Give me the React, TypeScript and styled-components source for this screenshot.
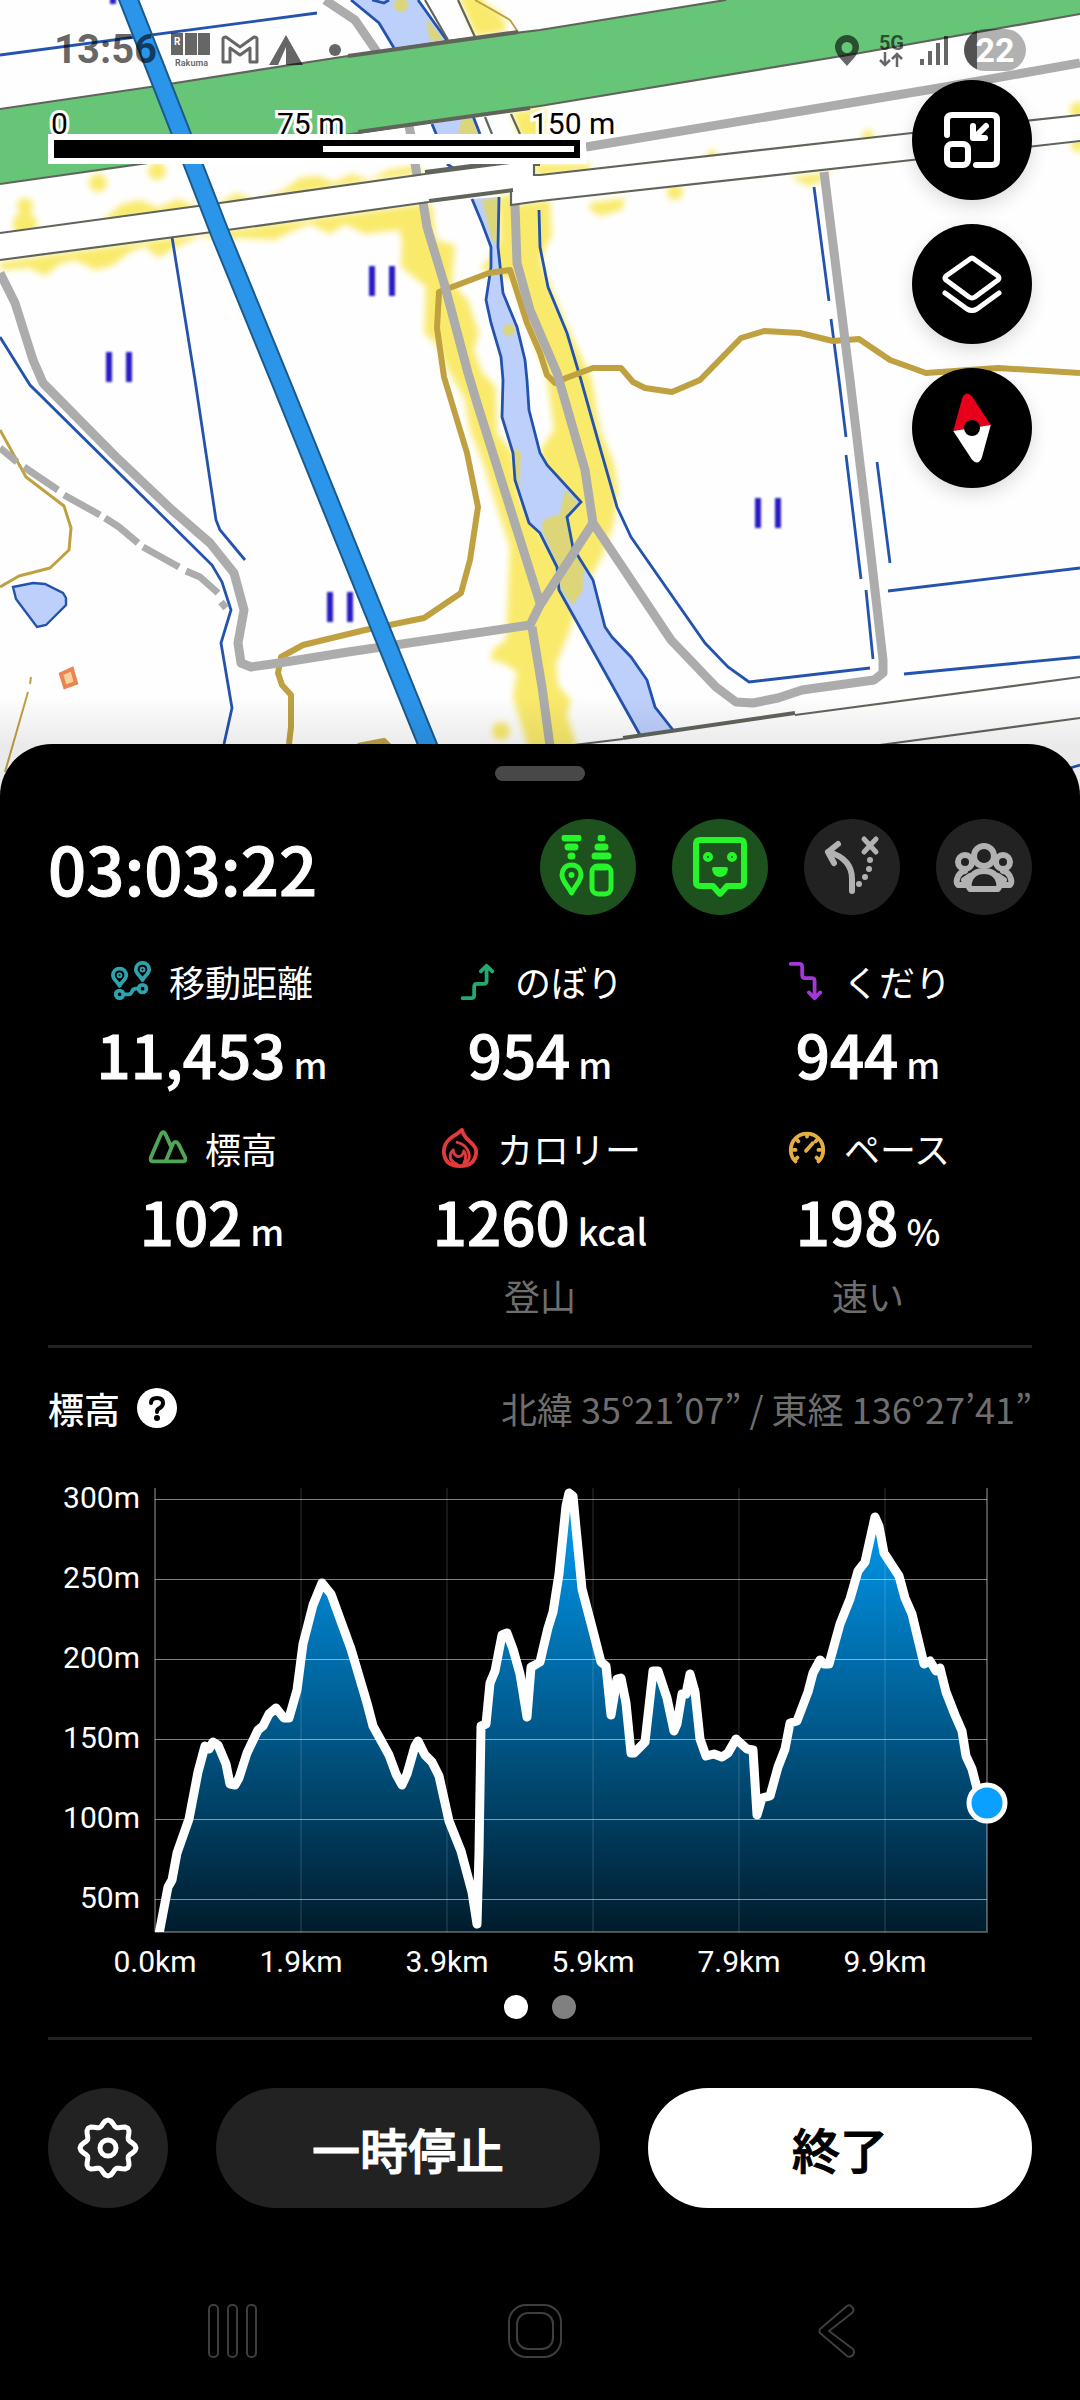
import React from 'react';
import styled, { createGlobalStyle, css } from 'styled-components';

const jp = '"Noto Sans CJK JP", "Noto Sans", sans-serif';
const roboto = 'Roboto, "Liberation Sans", sans-serif';

/* a weight between the family's Medium and Bold */
const semibold = css`
  font-weight: 500;
  -webkit-text-stroke: 1px currentColor;
`;

const GlobalStyle = createGlobalStyle`
  *, *::before, *::after { box-sizing: border-box; }
  body { margin: 0; background: #000; color: #fff; font-family: ${jp}; }
  button { border: 0; padding: 0; margin: 0; font: inherit; color: inherit; background: none; cursor: pointer; }
  svg { display: block; }
`;

const Screen = styled.div`
  min-height: 100vh;
  display: flex;
  flex-direction: column;
  background: #000;
`;

/* ---------- map ---------- */

const MapSection = styled.section`
  position: relative;
  height: 800px;
  overflow: hidden;
  background: #fefefe;
`;

const MapCanvas = styled.svg`
  position: absolute;
  inset: 0;
  width: 100%;
  height: 100%;
`;

const MapShade = styled.div`
  position: absolute;
  left: 0;
  right: 0;
  bottom: 0;
  height: 104px;
  background: linear-gradient(rgba(0, 0, 0, 0), rgba(0, 0, 0, 0.08) 48%, rgba(0, 0, 0, 0.08));
`;

const StatusBar = styled.header`
  position: relative;
  display: flex;
  align-items: center;
  justify-content: space-between;
  height: 80px;
  padding: 20px 54px 0;
  color: rgba(0, 0, 0, 0.6);
  font-family: ${roboto};
`;

const StatusGroup = styled.div<{ $gap: number }>`
  display: flex;
  align-items: center;
  gap: ${(p) => p.$gap}px;
`;

const Clock = styled.time`
  margin-right: 4px;
  font-size: 40px;
  line-height: 44px;
  font-weight: 700;
`;

const Dot = styled.span`
  width: 12px;
  height: 12px;
  margin-left: 16px;
  border-radius: 50%;
  background: currentColor;
`;

const Network = styled.span`
  display: flex;
  flex-direction: column;
  align-items: center;
  margin-left: 4px;
  font-size: 20px;
  line-height: 18px;
  font-weight: 700;
`;

const Battery = styled.span`
  display: grid;
  place-items: center;
  width: 62px;
  height: 42px;
  border-radius: 21px;
  background: linear-gradient(90deg, rgba(0, 0, 0, 0.68) 13px, rgba(0, 0, 0, 0.3) 13px);
  color: #fff;
  font-size: 34px;
  line-height: 42px;
  font-weight: 700;
`;

const MapOverlay = styled.div`
  position: relative;
  display: flex;
  justify-content: space-between;
  align-items: flex-start;
  padding: 0 48px;
`;

const Scale = styled.div`
  padding-top: 34px;
`;

const ScaleLabels = styled.div`
  display: grid;
  grid-template-columns: 226px 254px auto;
  padding-left: 3px;
  color: #000;
  font: 400 30px/20px ${roboto};
  -webkit-text-stroke: 6px #fff;
  paint-order: stroke fill;
`;

const ScaleTrack = styled.div`
  width: 538px;
  padding: 6px;
  background: #fff;
`;

const ScaleBar = styled.div`
  height: 18px;
  padding: 6px 6px 6px 269px;
  background: #000;
`;

const ScaleHalf = styled.div`
  height: 6px;
  background: #fff;
`;

const MapTools = styled.div`
  display: flex;
  flex-direction: column;
  gap: 24px;
`;

const MapButton = styled.button`
  display: grid;
  place-items: center;
  width: 120px;
  height: 120px;
  border-radius: 50%;
  background: #000;
  box-shadow: 0 6px 18px rgba(0, 0, 0, 0.14);
`;

/* ---------- sheet ---------- */

const Sheet = styled.main`
  position: relative;
  flex: 1;
  margin-top: -56px;
  padding: 22px 48px 0;
  border-radius: 52px 52px 0 0;
  background: #000;
  display: flex;
  flex-direction: column;
`;

const Handle = styled.div`
  align-self: center;
  width: 90px;
  height: 15px;
  border-radius: 8px;
  background: #484848;
`;

const Summary = styled.div`
  display: flex;
  align-items: center;
  justify-content: space-between;
  margin-top: 38px;
`;

const Timer = styled.h1`
  margin: 0;
  font-size: 67px;
  line-height: 96px;
  ${semibold}
`;

const Toggles = styled.div`
  display: flex;
  gap: 36px;
`;

const Toggle = styled.button<{ $on?: boolean }>`
  display: grid;
  place-items: center;
  width: 96px;
  height: 96px;
  border-radius: 50%;
  background: ${(p) => (p.$on ? '#1d521f' : '#222')};
  color: ${(p) => (p.$on ? '#27f52c' : '#b2b2b2')};
`;

const Stats = styled.dl`
  display: grid;
  grid-template-columns: repeat(3, 1fr);
  row-gap: 24px;
  margin: 40px 0 0;
  padding-bottom: 24px;
  border-bottom: 3px solid #222;
`;

const Stat = styled.div`
  display: flex;
  flex-direction: column;
  align-items: center;
`;

const StatLabel = styled.dt`
  display: flex;
  align-items: center;
  gap: 16px;
  font-size: 36px;
  line-height: 52px;
`;

const StatValue = styled.dd`
  display: flex;
  align-items: baseline;
  gap: 8px;
  height: 91px;
  margin: 0;
  font-size: 60px;
  line-height: 91px;
  ${semibold}
`;

const Unit = styled.span`
  font-size: 36px;
  -webkit-text-stroke: 0;
`;

const StatNote = styled.dd`
  margin: 4px 0 0;
  font-size: 36px;
  line-height: 52px;
  color: #6e6e6e;
`;

const ChartHeader = styled.div`
  display: flex;
  align-items: center;
  justify-content: space-between;
  margin-top: 34px;
`;

const ChartTitle = styled.h2`
  display: flex;
  align-items: center;
  gap: 16px;
  margin: 0;
  font-size: 36px;
  line-height: 52px;
  font-weight: 500;
`;

const HelpButton = styled.button`
  width: 42px;
  height: 42px;
`;

const Coordinates = styled.p`
  margin: 0;
  font-size: 36px;
  line-height: 52px;
  color: #6e6e6e;
`;

const Chart = styled.svg`
  width: 100%;
  margin-top: 34px;
  font: 400 30px ${roboto};
`;

const Pager = styled.div`
  display: flex;
  justify-content: center;
  gap: 24px;
  margin-top: 13px;
  padding-bottom: 18px;
  border-bottom: 3px solid #222;
`;

const PageDot = styled.button<{ $active?: boolean }>`
  width: 24px;
  height: 24px;
  border-radius: 50%;
  background: ${(p) => (p.$active ? '#fff' : '#808080')};
`;

const Actions = styled.div`
  display: flex;
  gap: 48px;
  margin-top: 48px;
`;

const SettingsButton = styled.button`
  display: grid;
  place-items: center;
  width: 120px;
  height: 120px;
  border-radius: 50%;
  background: #222;
`;

const ActionButton = styled.button<{ $primary?: boolean }>`
  flex: 1;
  height: 120px;
  border-radius: 60px;
  font-size: 48px;
  line-height: 72px;
  ${semibold}
  background: ${(p) => (p.$primary ? '#fff' : '#222')};
  color: ${(p) => (p.$primary ? '#000' : '#fff')};
`;

const SystemNav = styled.nav`
  display: grid;
  grid-template-columns: repeat(3, 302px);
  justify-content: center;
  margin-top: 88px;
  padding-right: 10px;
`;

const NavButton = styled.button`
  display: grid;
  place-items: center;
  height: 70px;
`;

/* ---------- map artwork ---------- */

const fields: [number, number][] = [
  [382, 281],
  [119, 367],
  [340, 607],
  [768, 513],
];

const BaseMap = () => (
  <MapCanvas viewBox="0 0 1080 800" preserveAspectRatio="xMidYMin slice" aria-hidden="true">
    <defs>
      <filter id="soft" x="-5%" y="-5%" width="110%" height="110%">
        <feGaussianBlur stdDeviation="3" />
      </filter>
      <filter id="tiny" x="-20%" y="-20%" width="140%" height="140%">
        <feGaussianBlur stdDeviation="1" />
      </filter>
    </defs>

    <g fill="#f9ea6c" filter="url(#soft)">
      <path d="M458 -5L482 -5L490 20L476 38Z M476 0Q510 12 505 32L476 36Z" />
      <path d="M512 112L545 108V138H520Z M535 164H592L588 172L535 176Z" />
      <circle cx="25" cy="206" r="8" />
      <circle cx="25" cy="224" r="12" />
      <circle cx="98" cy="183" r="9" />
      <circle cx="157" cy="171" r="9" />
      <path d="M100 222L122 204L140 200L158 208L178 199L195 206L220 203L236 193L255 200L282 191L300 178L318 176L334 182L352 174L370 180L388 170L413 166L427 172L220 206Z" />
      <path d="M0 262L120 245L420 204L432 205L436 240L455 245L452 283L468 300L479 333L474 350L482 372L496 387L497 433L513 453L520 500L545 540L560 560L540 450L554 430L550 400L546 372L527 323L513 280L497 276L480 268L490 258L500 240L498 198L512 193L513 205L550 200L552 236L546 246L541 262L560 310L592 380L600 430L614 463L618 490L614 523L602 557L585 587L576 610L569 633L556 665L558 685L571 700L567 715L576 744L576 780L527 780L527 744L513 697L517 672L505 664L490 659L494 648L506 640L510 547L501 520L482 460L470 430L465 400L458 387L448 370L437 345L424 333L426 287L401 267L402 240L399 230L365 234L345 224L330 234L310 224L290 232L275 240L240 238L225 240L200 236L175 248L158 258L145 246L130 252L112 266L95 270L75 260L60 264L45 276L30 268L0 270Z" />
      <circle cx="501" cy="731" r="9" />
      <path d="M590 203L625 198L622 210L600 216L590 210Z" />
      <circle cx="675" cy="192" r="8" />
      <path d="M790 177L832 172L825 180L808 186Z" />
      <circle cx="868" cy="136" r="6" />
      <circle cx="712" cy="155" r="5" />
      <circle cx="1078" cy="110" r="8" />
      <circle cx="1078" cy="145" r="7" />
    </g>

    <path d="M0 233L220 203L510 163L535 165V175L912 133L1080 115V141L912 160L511 205V192L429 202L0 260Z" fill="#fff" />

    {/* river */}
    <g fill="#bdd0fc">
      <path d="M351 0L379 23L394 48L448 42L418 0Z" />
      <path d="M432 124L437 136H480L473 116Z" />
      <path d="M472 199L482 223L491 247V267L486 300L491 323L501 357L503 380L502 417L513 453L515 480L529 523L540 533L557 567L559 590L640 735L673 730L655 707L647 680L631 657L612 637L605 627L593 580L573 548L567 517L581 502L547 465L540 453L529 410L527 380L525 360L517 327L503 293L498 247L499 197Z" />
    </g>
    <g fill="#dcd678" filter="url(#tiny)">
      <circle cx="401" cy="5" r="7" />
      <path d="M426 18L445 41L430 40Z M462 118H473L479 134H458Z" />
      <path d="M482 200L498 198L497 245L492 240Z" />
      <circle cx="509" cy="330" r="6" />
      <path d="M513 448L521 452L519 490L517 488Z" />
      <path d="M565 490L578 502L568 516L574 545L584 566L583 590L573 605L561 590L558 567L542 530L543 520L560 514Z" />
    </g>
    <g fill="none" stroke="#2453ae" strokeWidth="2.8">
      <path d="M351 0L379 23L394 48 M418 0L448 42 M372 0L384 3L389 0 M432 124L437 136 M473 116L480 134 M447 164L453 168" />
      <path d="M472 199L482 223L491 247V267L486 300L491 323L501 357L503 380L502 417L513 453L515 480L529 523L540 533L557 567L559 590L640 735" />
      <path d="M499 197L498 247L503 293L517 327L525 360L527 380L529 410L540 453L547 465L581 502L567 517L573 548L593 580L605 627L612 637L631 657L647 680L655 707L673 730" />
      <path d="M0 55L317 13 M172 237L195 380L216 520L220 530L245 560" />
      <path d="M0 337L30 385L212 565L222 582L231 610L221 643L232 708L224 744" />
      <path d="M539 210L540 247L548 287L567 333L581 380L597 437L617 507L631 537L705 643L728 667L749 682L870 668" />
      <path d="M814 187L829 301 M831 319L839 380L846 437 M846 455L861 579 M866 590L873 659 M877 462L890 563 M888 591L1080 568 M904 674L1080 657" />
      <path d="M1070 768L1080 765" />
    </g>
    <path d="M13 587L33 583L45 584L63 593L66 598V605L46 625L37 627L16 599Z" fill="#bdd0fc" stroke="#2453ae" strokeWidth="2.4" />
    <path d="M61 674L72 669L76 683L65 687Z" fill="#fbd09b" stroke="#ea8452" strokeWidth="4" />

    {/* contour lines */}
    <g fill="none" stroke="#bfa142" strokeLinejoin="round">
      <path strokeWidth="6" d="M289 744L291 727V695L282 685L278 673L281 657L303 645L365 630L424 618L461 593L470 560L478 507L467 453L444 377L437 328L439 292L489 273L510 270L527 323L540 353L547 375L555 383L566 378L593 368H621L633 382L645 388L672 392L700 380L741 338L764 331L800 333L833 341L859 339L890 360L926 373L998 368L1080 373" />
      <path strokeWidth="3" d="M0 430L26 477L64 506L71 528L69 550L50 568L19 576L0 587" />
      <path strokeWidth="2" d="M31 677L30 684 M28 692L5 772" />
      <path strokeWidth="2" d="M475 0L510 20L518 32" />
      <path strokeWidth="6" d="M358 746L384 741L389 746" />
    </g>

    {/* roads */}
    <g fill="none" stroke="#acacac" strokeWidth="9" strokeLinejoin="round">
      <path d="M325 0L355 20L377 52 M409 126L411 136 M415 163L417 176 M586 147L939 88L1080 63" />
      <path d="M0 273L15 303L33 360L43 383L114 455L172 510L210 543L234 573L244 610L238 643L241 663L251 667L279 663L348 652L530 625L540 605L593 523" />
      <path d="M423 202L427 227L444 283L468 373L477 403L540 603 M515 205L517 263L530 310L557 373L585 470L593 523L671 640L716 687L736 702L753 703L778 698L802 690L874 680L883 673V660L870 547L850 380L824 172 M532 627L542 687L550 746" />
      <path strokeWidth="7" d="M0 448L17 462 M24 467L58 490 M64 495L100 515 M105 518L119 527L138 543 M143 547L179 567 M186 571L200 577L218 593 M221 602L226 608" />
    </g>

    <path d="M0 109L150 87L348 56L448 41L540 30L726 0H1080V14L860 53L540 106L358 133L0 184Z" fill="#67c578" />
    <g fill="none" stroke="#60655c" strokeWidth="2.2">
      <path d="M0 109L150 87L348 56L448 41L540 30L726 0 M1080 14L860 53L540 106L358 133L0 184" />
      <path d="M0 233L220 203L425 174L510 163 M540 175L912 133L1080 115 M0 260L220 231L429 202 M511 192V205L540 201L912 160L1080 141 M540 165H534V175H540" />
      <path d="M425 0L448 40 M458 0L475 37 M485 117L492 134 M511 114L520 134" />
      <path d="M574 745L623 739 M795 715L1080 677 M880 745L1080 718" />
      <path strokeWidth="4" d="M348 56L518 32 M358 132L530 108 M425 172L510 161 M429 201L513 190 M623 738L795 713" />
    </g>

    <g fill="#2a1dc4" filter="url(#tiny)">
      <rect x="110" y="-10" width="6" height="14" />
      {fields.map(([x, y]) => (
        <path key={x} d={`M${x - 13} ${y - 15}h6v30h-6z M${x + 7} ${y - 15}h6v30h-6z`} />
      ))}
    </g>

    {/* recorded track */}
    <g fill="none">
      <path d="M124 -12L181 133L221 236L280 380L437 768" stroke="#1b5a8c" strokeWidth="20" />
      <path d="M124 -12L181 133L221 236L280 380L437 768" stroke="#2b95ea" strokeWidth="16" />
    </g>
  </MapCanvas>
);

/* ---------- icons ---------- */

type LineProps = { size: number; box: number; width: number; color?: string; children: React.ReactNode };

const LineIcon = ({ size, box, width, color = 'currentColor', children }: LineProps) => (
  <svg width={size} height={size} viewBox={`0 0 ${box} ${box}`} fill="none" stroke={color} strokeWidth={width} strokeLinecap="round" strokeLinejoin="round" aria-hidden="true">
    {children}
  </svg>
);

const RakumaIcon = () => (
  <svg width="40" height="36" viewBox="0 0 40 36" fill="currentColor" aria-hidden="true">
    <path d="M0 1h12v22H0z M14 1h12v22H14z M27 1h12v22H27z" />
    <text x="3" y="13" fontSize="10" fontWeight="700" fill="#fff">R</text>
    <text x="4" y="34" fontSize="9" fontWeight="700">Rakuma</text>
  </svg>
);

const MailIcon = () => (
  <svg width="38" height="30" viewBox="0 0 38 30" fill="none" stroke="currentColor" strokeWidth="3" strokeLinejoin="round" aria-hidden="true">
    <path d="M2 27V4Q2 2 5 2L19 12L33 2Q36 2 36 4V27H29V13L19 20L9 13V27Z" />
  </svg>
);

const TentIcon = () => (
  <svg width="34" height="30" viewBox="0 0 34 30" fill="currentColor" aria-hidden="true">
    <path d="M17 0L34 30H17V12L9 30H0Z" />
  </svg>
);

const PinIcon = () => (
  <svg width="24" height="31" viewBox="0 0 24 31" fill="currentColor" fillRule="evenodd" aria-hidden="true">
    <path d="M12 0a12 12 0 0 1 12 12c0 7-7 13-12 19C7 25 0 19 0 12A12 12 0 0 1 12 0Zm0 7a5.500 5.500 0 1 0 0 11a5.500 5.500 0 0 0 0-11Z" />
  </svg>
);

const DataArrows = () => (
  <svg width="24" height="15" viewBox="0 0 24 15" fill="none" stroke="currentColor" strokeWidth="2.500" aria-hidden="true">
    <path d="M6 0V13 M1 8L6 13L11 8 M18 15V2 M13 7L18 2L23 7" />
  </svg>
);

const SignalIcon = () => (
  <svg width="28" height="29" viewBox="0 0 28 29" fill="currentColor" aria-hidden="true">
    <path d="M0 23h4v6H0z M8 15h4v14H8z M16 7h4v22h-4z M24 0h4v29h-4z" />
  </svg>
);

const CollapseIcon = () => (
  <LineIcon size={60} box={60} width={6} color="#fff">
    <path d="M5 25V10Q5 5 10 5H50Q55 5 55 10V50Q55 55 50 55H34" />
    <rect x="5" y="34" width="21" height="21" rx="5" />
    <path d="M44 16L33 27 M31 16V28H43" />
  </LineIcon>
);

const LayersIcon = () => (
  <LineIcon size={60} box={60} width={5} color="#fff">
    <path d="M28 5Q30 3 32 5L56 22Q58 24 56 26L33 43Q30 45 27 43L4 26Q2 24 4 22Z" />
    <path d="M3 39L25 55Q30 58 35 55L57 39" />
  </LineIcon>
);

const CompassIcon = () => (
  <svg width="80" height="80" viewBox="0 0 80 80" aria-hidden="true">
    <g transform="rotate(-9 40 40)">
      <path d="M21 40L35 9Q40 1 45 9L59 40Z" fill="#e6001a" />
      <path d="M21 40L35 71Q40 79 45 71L59 40Z" fill="#fff" />
    </g>
    <circle cx="40" cy="40" r="8" fill="#000" />
  </svg>
);

const GearCompareIcon = () => (
  <LineIcon size={64} box={64} width={5}>
    <path strokeWidth="7" d="M9 3H22 M12 12H19 M15 21H16 M45 3H46 M42 12H49 M39 21H52" />
    <path d="M15.500 30C9 30 6 35 6 40C6 46 12 51 15.500 58C19 51 25 46 25 40C25 35 22 30 15.500 30Z" />
    <rect x="36" y="31" width="19" height="28" rx="6" />
    <circle cx="15.500" cy="40" r="1.500" strokeWidth="3" />
    <path d="M41 33H50" />
  </LineIcon>
);

const FaceIcon = () => (
  <LineIcon size={64} box={64} width={6}>
    <path d="M12 5H52Q56 5 56 9V47Q56 51 52 51H39L33 58Q32 60 31 58L25 51H12Q8 51 8 47V9Q8 5 12 5Z" />
    <circle cx="20" cy="22" r="2" />
    <circle cx="44" cy="22" r="2" />
    <path d="M26 34H38Q37 40 32 40Q27 40 26 34Z" fill="currentColor" strokeWidth="4" />
  </LineIcon>
);

const DetourIcon = () => (
  <LineIcon size={64} box={64} width={6}>
    <path d="M32 56V44Q32 24 9 17 M8 17L18 9 M8 17L14 28" />
    <path strokeWidth="5" d="M44 4L56 17 M56 4L44 17" />
    <path d="M50 25V25 M49 34V34 M45 42V42 M39 49V49" />
  </LineIcon>
);

const GroupIcon = () => (
  <LineIcon size={64} box={64} width={6}>
    <circle cx="32" cy="21" r="10" />
    <path d="M18 54Q16 52 17 47Q20 36 32 36Q44 36 47 47Q48 52 46 54Z" />
    <path d="M15 50H6Q4 48 5 44Q7 37 13 36 M49 50H58Q60 48 59 44Q57 37 51 36" />
    <circle cx="13" cy="27" r="7" />
    <circle cx="51" cy="27" r="7" />
    <path d="M12 45L18 41 M52 45L46 41" />
  </LineIcon>
);

const DistanceIcon = () => (
  <LineIcon size={42} box={44} width={4} color="#2fa3ad">
    <path d="M9 9C5 9 2 12 2 16C2 20 7 23 9 27C11 23 16 20 16 16C16 12 13 9 9 9Z M33 3C29 3 26 6 26 10C26 14 31 17 33 21C35 17 40 14 40 10C40 6 37 3 33 3Z" />
    <circle cx="9" cy="16" r="1" />
    <circle cx="33" cy="10" r="1" />
    <circle cx="9" cy="36" r="4" />
    <circle cx="33" cy="30" r="4" />
    <path d="M14 36H18Q21 36 22 33Q23 30 26 30H29" />
  </LineIcon>
);

const ClimbIcon = () => (
  <LineIcon size={42} box={44} width={4} color="#27a871">
    <path d="M6 40H15Q18 40 18 37V28Q18 25 21 25H28Q31 25 31 22V7 M25 12L31 6L37 12" />
  </LineIcon>
);

const DescendIcon = () => (
  <LineIcon size={42} box={44} width={4} color="#a238d8">
    <path d="M6 4H15Q18 4 18 7V16Q18 19 21 19H28Q31 19 31 22V37 M25 34L31 40L37 34" />
  </LineIcon>
);

const MountainIcon = () => (
  <LineIcon size={42} box={44} width={4} color="#4fa657">
    <path d="M6 36H38Q41 36 40 32L33 18Q30 13 27 18L20 35 M6 36Q3 36 4 32L14 9Q17 2 20 9L25 20" />
  </LineIcon>
);

const FlameIcon = () => (
  <LineIcon size={42} box={44} width={4} color="#e03a3c">
    <path d="M24 3Q26 10 32 15Q39 21 39 26Q38 41 22 41Q6 41 5 26Q5 17 13 11Q20 7 24 3Z" />
    <path d="M19 16Q27 18 30 24Q35 35 26 38Q30 30 26 25Q25 31 20 31Q15 29 15 24Q11 27 12 33Q14 37 19 39" strokeWidth="3" />
  </LineIcon>
);

const PaceIcon = () => (
  <LineIcon size={42} box={44} width={4} color="#e5ae45">
    <path d="M10 36A17 17 0 1 1 34 36" />
    <path d="M22 8V10 M8 24H10 M34 24H36 M12 14L13 15 M10 34L12 32 M34 34L32 32 M31 15L32 14 M21 25L28 17" />
  </LineIcon>
);

const HelpIcon = () => (
  <svg width="42" height="42" viewBox="0 0 42 42" aria-hidden="true">
    <circle cx="21" cy="21" r="20" fill="#fff" />
    <path d="M15 16Q15 11 21 11Q27 11 27 16Q27 19 24 21Q21 22 21 25" fill="none" stroke="#000" strokeWidth="4" strokeLinecap="round" />
    <circle cx="21" cy="31" r="3" fill="#000" />
  </svg>
);

const gearPath = (() => {
  const steps = 64;
  const pts = Array.from({ length: steps }, (_, i) => {
    const a = (i / steps) * Math.PI * 2;
    const r = 25 + 3 * Math.cos(a * 8);
    return `${(32 + r * Math.sin(a)).toFixed(1)} ${(32 - r * Math.cos(a)).toFixed(1)}`;
  });
  return `M${pts.join('L')}Z`;
})();

const GearIcon = () => (
  <LineIcon size={64} box={64} width={5} color="#fff">
    <path d={gearPath} />
    <circle cx="32" cy="32" r="8" />
  </LineIcon>
);

/* ---------- elevation chart ---------- */

const profile: [number, number][] = [
  [4, 446], [13, 399], [17, 392], [22, 365], [34, 331], [43, 284], [50, 258], [54, 261], [58, 254], [63, 257],
  [71, 276], [75, 296], [80, 297], [84, 290], [92, 265], [103, 242], [108, 238], [114, 226], [121, 220], [129, 230],
  [134, 230], [142, 202], [148, 156], [158, 117], [167, 95], [176, 106], [196, 161], [212, 215], [218, 238], [234, 267],
  [241, 286], [247, 297], [252, 286], [260, 258], [263, 253], [270, 267], [277, 274], [284, 288], [294, 333], [306, 363],
  [317, 404], [322, 436], [324, 365], [326, 238], [331, 236], [335, 195], [340, 183], [347, 147], [352, 145], [358, 161],
  [365, 186], [372, 229], [376, 179], [380, 177], [385, 174], [388, 161], [393, 140], [398, 124], [404, 86], [411, 18],
  [414, 5], [418, 8], [421, 40], [427, 101], [438, 143], [446, 174], [451, 178], [456, 227], [462, 191], [466, 190],
  [471, 215], [476, 265], [479, 265], [490, 254], [498, 183], [503, 183], [512, 210], [519, 243], [522, 236], [527, 206],
  [531, 206], [535, 186], [540, 204], [545, 251], [551, 268], [559, 266], [567, 269], [573, 265], [581, 251], [592, 261],
  [598, 262], [602, 327], [607, 310], [615, 308], [623, 279], [630, 261], [635, 235], [642, 233], [653, 204], [658, 185],
  [665, 172], [669, 176], [674, 176], [685, 136], [695, 111], [703, 83], [710, 74], [716, 47], [720, 29], [724, 38],
  [729, 65], [744, 88], [750, 110], [757, 126], [769, 176], [775, 173], [781, 183], [785, 180], [791, 204], [800, 227],
  [807, 243], [811, 268], [817, 281], [824, 308], [832, 315],
];

const yTicks = [300, 250, 200, 150, 100, 50];
const xTicks = ['0.0km', '1.9km', '3.9km', '5.9km', '7.9km', '9.9km'];
const line = `M${profile.map((p) => p.join(' ')).join('L')}`;

const ElevationChart = () => (
  <Chart viewBox="-107 -20 984 514" role="img" aria-label="標高">
    <defs>
      <linearGradient id="area" x1="0" y1="0" x2="0" y2="444" gradientUnits="userSpaceOnUse">
        <stop offset="0" stopColor="#00a0fa" />
        <stop offset="1" stopColor="#001c2c" />
      </linearGradient>
      <clipPath id="plot">
        <rect x="0" y="-6" width="840" height="450" />
      </clipPath>
    </defs>
    <path d={`${line}V444H0Z`} fill="url(#area)" />
    <g stroke="#fff">
      {yTicks.map((t, i) => (
        <path key={t} d={`M0 ${11.5 + i * 80}H832`} strokeOpacity="0.5" />
      ))}
      {xTicks.map((t, i) => (
        <path key={t} d={`M${i * 146} 0V444`} strokeOpacity={i ? 0.09 : 0.3} strokeWidth="2" />
      ))}
      <path d="M832 0V444H0" fill="none" strokeOpacity="0.3" strokeWidth="2" />
    </g>
    <path d={line} clipPath="url(#plot)" fill="none" stroke="#fff" strokeWidth="9" strokeLinejoin="round" />
    <circle cx="832" cy="315" r="18" fill="#0aa0ff" stroke="#fff" strokeWidth="5" />
    <g fill="#fff">
      {yTicks.map((t, i) => (
        <text key={t} x="-15" y={20 + i * 80} textAnchor="end">{t}m</text>
      ))}
      {xTicks.map((t, i) => (
        <text key={t} x={i * 146} y="484" textAnchor="middle">{t}</text>
      ))}
    </g>
  </Chart>
);

/* ---------- page ---------- */

const stats = [
  { icon: <DistanceIcon />, label: '移動距離', value: '11,453', unit: 'm' },
  { icon: <ClimbIcon />, label: 'のぼり', value: '954', unit: 'm' },
  { icon: <DescendIcon />, label: 'くだり', value: '944', unit: 'm' },
  { icon: <MountainIcon />, label: '標高', value: '102', unit: 'm' },
  { icon: <FlameIcon />, label: 'カロリー', value: '1260', unit: 'kcal', note: '登山' },
  { icon: <PaceIcon />, label: 'ペース', value: '198', unit: '%', note: '速い' },
];

export default function App() {
  return (
    <Screen lang="ja">
      <GlobalStyle />
      <MapSection>
        <BaseMap />
        <MapShade />
        <StatusBar>
          <StatusGroup $gap={10}>
            <Clock>13:56</Clock>
            <RakumaIcon />
            <MailIcon />
            <TentIcon />
            <Dot />
          </StatusGroup>
          <StatusGroup $gap={16}>
            <PinIcon />
            <Network>
              5G
              <DataArrows />
            </Network>
            <SignalIcon />
            <Battery>22</Battery>
          </StatusGroup>
        </StatusBar>
        <MapOverlay>
          <Scale>
            <ScaleLabels>
              <span>0</span>
              <span>75 m</span>
              <span>150 m</span>
            </ScaleLabels>
            <ScaleTrack>
              <ScaleBar>
                <ScaleHalf />
              </ScaleBar>
            </ScaleTrack>
          </Scale>
          <MapTools>
            <MapButton aria-label="縮小"><CollapseIcon /></MapButton>
            <MapButton aria-label="レイヤー"><LayersIcon /></MapButton>
            <MapButton aria-label="コンパス"><CompassIcon /></MapButton>
          </MapTools>
        </MapOverlay>
      </MapSection>

      <Sheet>
        <Handle />
        <Summary>
          <Timer>03:03:22</Timer>
          <Toggles>
            <Toggle $on aria-label="位置と端末"><GearCompareIcon /></Toggle>
            <Toggle $on aria-label="みまもり"><FaceIcon /></Toggle>
            <Toggle aria-label="ルート"><DetourIcon /></Toggle>
            <Toggle aria-label="グループ"><GroupIcon /></Toggle>
          </Toggles>
        </Summary>

        <Stats>
          {stats.map((s) => (
            <Stat key={s.label}>
              <StatLabel>
                {s.icon}
                {s.label}
              </StatLabel>
              <StatValue>
                {s.value}
                <Unit>{s.unit}</Unit>
              </StatValue>
              {s.note && <StatNote>{s.note}</StatNote>}
            </Stat>
          ))}
        </Stats>

        <ChartHeader>
          <ChartTitle>
            標高
            <HelpButton aria-label="ヘルプ"><HelpIcon /></HelpButton>
          </ChartTitle>
          <Coordinates>北緯 35°21’07” / 東経 136°27’41”</Coordinates>
        </ChartHeader>
        <ElevationChart />
        <Pager>
          <PageDot $active aria-label="1" />
          <PageDot aria-label="2" />
        </Pager>

        <Actions>
          <SettingsButton aria-label="設定"><GearIcon /></SettingsButton>
          <ActionButton>一時停止</ActionButton>
          <ActionButton $primary>終了</ActionButton>
        </Actions>

        <SystemNav>
          <NavButton aria-label="履歴">
            <svg width="50" height="56" viewBox="0 0 50 56" fill="none" stroke="#3e3e3e" strokeWidth="2" aria-hidden="true">
              <rect x="1" y="2" width="9" height="52" rx="4" />
              <rect x="20" y="2" width="9" height="52" rx="4" />
              <rect x="39" y="2" width="9" height="52" rx="4" />
            </svg>
          </NavButton>
          <NavButton aria-label="ホーム">
            <svg width="56" height="56" viewBox="0 0 56 56" fill="none" stroke="#3e3e3e" strokeWidth="2" aria-hidden="true">
              <rect x="2" y="2" width="52" height="52" rx="17" />
              <rect x="10" y="10" width="36" height="36" rx="11" />
            </svg>
          </NavButton>
          <NavButton aria-label="戻る">
            <svg width="38" height="56" viewBox="0 0 38 56" fill="none" stroke="#3e3e3e" strokeWidth="2" strokeLinejoin="round" aria-hidden="true">
              <path d="M29 3L2 26Q1 28 2 30L29 53Q32 55 35 52Q37 49 35 46L11 28L34 10Q37 7 34 4Q32 1 29 3Z" />
            </svg>
          </NavButton>
        </SystemNav>
      </Sheet>
    </Screen>
  );
}
